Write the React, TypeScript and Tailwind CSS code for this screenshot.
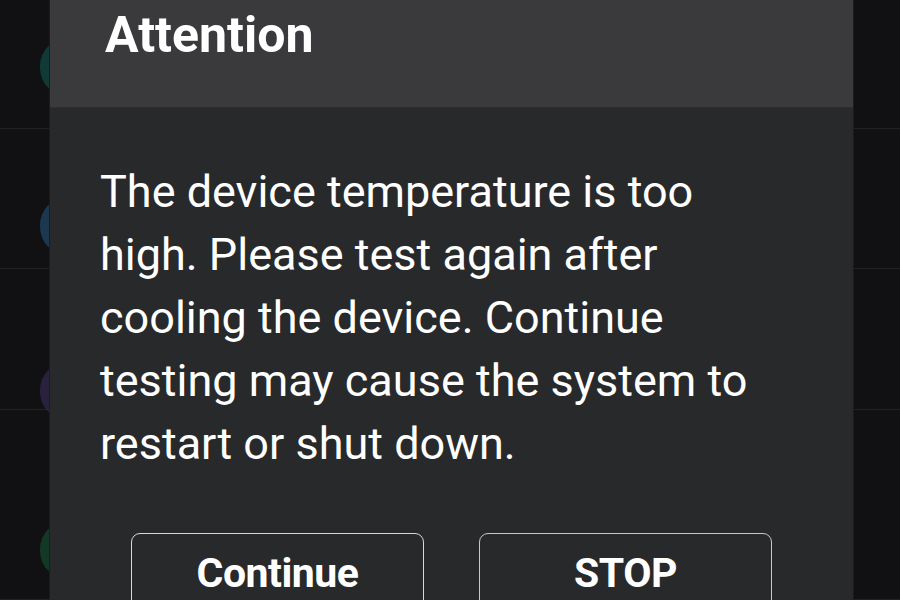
import React from "react"

const rows = [
  { h: "h-[129px]", top: "mt-[38px]", color: "bg-[#103a35]" },
  { h: "h-[140px]", top: "mt-[68px]", color: "bg-[#1b3850]" },
  { h: "h-[141px]", top: "mt-[93px]", color: "bg-[#2a213d]" },
  { h: "h-[190px]", top: "mt-[111px]", color: "bg-[#123826]" },
]

export default function App() {
  return (
    <div
      className="relative w-[900px] h-[600px] overflow-hidden bg-[#111113]"
      style={{ fontFamily: "Roboto, 'Liberation Sans', sans-serif" }}
    >
      {/* list behind the dialog */}
      <div className="flex flex-col">
        {rows.map((r, i) => (
          <div key={i} className={`${r.h} shrink-0 border-b border-[#222224] pl-[40px]`}>
            <div className={`${r.top} ${r.color} w-[56px] h-[58px] rounded-full`} />
          </div>
        ))}
      </div>

      {/* dialog */}
      <div className="absolute left-[50px] top-0 w-[803px] h-[600px] flex flex-col bg-[#28292b] shadow-[0_0_0_1px_#1c1c1e]">
        <div className="h-[108px] shrink-0 bg-[#3a3a3c] pl-[55px] pt-[10px] border-b border-[#2e2e30]">
          <h1 className="text-[50px] leading-[50px] font-bold text-white">Attention</h1>
        </div>
        <p className="shrink-0 pl-[50px] pr-[90px] pt-[52px] text-[45px] leading-[63px] text-white">
          The device temperature is too high. Please test again after cooling the device. Continue testing may cause the system to restart or shut down.
        </p>
        <div className="shrink-0 flex justify-between px-[81px] mt-[58px]">
          <button className="w-[293px] h-[80px] flex items-center justify-center rounded-[9px] border-[1.5px] border-[#d8d8d8] text-white text-[41px] leading-[41px] font-bold tracking-[-0.5px]">
            Continue
          </button>
          <button className="w-[293px] h-[80px] flex items-center justify-center rounded-[9px] border-[1.5px] border-[#c8c8c8] text-white text-[41px] leading-[41px] font-bold tracking-[-0.5px]">
            STOP
          </button>
        </div>
      </div>
    </div>
  )
}
